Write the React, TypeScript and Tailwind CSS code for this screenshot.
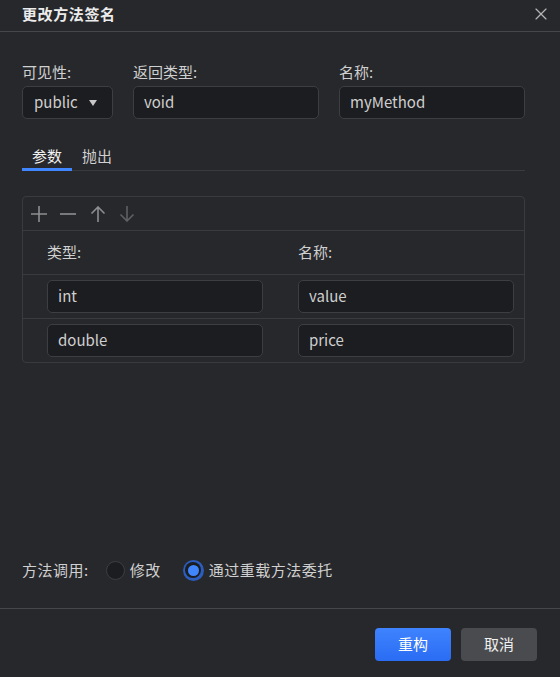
import { X } from "lucide-react";

const font = { fontFamily: '"Noto Sans CJK SC", "Noto Sans", sans-serif' };

function TextBox({ value, className = "" }: { value: string; className?: string }) {
  return (
    <div
      className={`h-[33px] rounded-[5px] border border-[#3d3e42] bg-[#1c1d20] px-[10px] flex items-center text-[15px] text-[#cfcfcf] ${className}`}
    >
      {value}
    </div>
  );
}

function Radio({ checked, label }: { checked?: boolean; label: string }) {
  return (
    <label className="flex items-center gap-[5px]">
      {checked ? (
        <span className="w-[21px] h-[21px] rounded-full bg-[#2a5dbd] flex items-center justify-center">
          <span className="w-[16px] h-[16px] rounded-full bg-[#1c1d20] flex items-center justify-center">
            <span className="w-[11px] h-[11px] rounded-full bg-[#3f86ff]" />
          </span>
        </span>
      ) : (
        <span className="w-[19px] h-[19px] rounded-full border border-[#3d3e42] bg-[#1c1d20]" />
      )}
      <span>{label}</span>
    </label>
  );
}

// toolbar glyphs, 16px box, thin strokes
function ToolIcon({ kind, color }: { kind: "plus" | "minus" | "up" | "down"; color: string }) {
  return (
    <svg width="16" height="16" viewBox="0 0 16 16" fill="none" stroke={color} strokeWidth="1.6">
      {kind === "plus" && <path d="M0 8h16M8 0v16" />}
      {kind === "minus" && <path d="M0 8h16" />}
      {kind === "up" && <path d="M8 1v15M1.5 7.5L8 1l6.5 6.5" />}
      {kind === "down" && <path d="M8 0v15M1.5 8.5L8 15l6.5-6.5" />}
    </svg>
  );
}

export default function App() {
  const params = [
    { type: "int", name: "value" },
    { type: "double", name: "price" },
  ];

  return (
    <div
      className="h-[677px] w-[560px] flex flex-col bg-[#27282b] text-[15px] text-[#d0d0d0]"
      style={font}
    >
      {/* Header */}
      <div className="h-[32px] shrink-0 border-b border-[#46474b] pl-[22px] pr-[9px] flex items-center justify-between">
        <span className="text-[15px] font-bold tracking-[0.6px] text-[#ececec] -mt-[2px]">更改方法签名</span>
        <X className="w-[20px] h-[20px] text-[#b4b4b4] -mt-[3px]" strokeWidth={1.4} />
      </div>

      {/* Body */}
      <div className="flex-1 px-[22px] pt-[30px]">
        <div className="flex gap-[20px] pr-[12px]">
          <div className="w-[91px]">
            <div className="leading-[20px] mb-[4px]">可见性:</div>
            <div className="h-[33px] rounded-[5px] border border-[#3d3e42] bg-[#1c1d20] pl-[11px] pr-[15px] flex items-center justify-between text-[#cfcfcf]">
              <span>public</span>
              <span className="w-0 h-0 border-l-[4px] border-r-[4px] border-t-[6px] border-l-transparent border-r-transparent border-t-[#c8c8c8]" />
            </div>
          </div>
          <div className="w-[186px]">
            <div className="leading-[20px] mb-[4px]">返回类型:</div>
            <TextBox value="void" />
          </div>
          <div className="w-[186px]">
            <div className="leading-[20px] mb-[4px]">名称:</div>
            <TextBox value="myMethod" />
          </div>
        </div>

        {/* Tabs */}
        <div className="mt-[27px] mr-[13px] flex border-b border-[#3a3b3f]">
          <div className="px-[10px] pb-[2px] leading-[20px] text-[#f0f0f0] border-b-[3px] border-[#3f86ff] -mb-px">
            参数
          </div>
          <div className="px-[10px] leading-[20px] text-[#d0d0d0]">抛出</div>
        </div>

        {/* Parameter table */}
        <div className="mt-[25px] mr-[13px] rounded-[4px] border border-[#3a3b3f]">
          <div className="h-[34px] flex items-center pl-[8px] border-b border-[#3a3b3f]">
            <ToolIcon kind="plus" color="#8d8e91" />
            <span className="ml-[13px]"><ToolIcon kind="minus" color="#8d8e91" /></span>
            <span className="ml-[14px]"><ToolIcon kind="up" color="#8d8e91" /></span>
            <span className="ml-[13px]"><ToolIcon kind="down" color="#5f6064" /></span>
          </div>
          <div className="h-[43px] grid grid-cols-2 gap-[35px] pl-[24px] pr-[10px] items-center">
            <span>类型:</span>
            <span>名称:</span>
          </div>
          {params.map((p) => (
            <div
              key={p.name}
              className="h-[44px] grid grid-cols-2 gap-[35px] pl-[24px] pr-[10px] items-center border-t border-[#3a3b3f]"
            >
              <TextBox value={p.type} />
              <TextBox value={p.name} />
            </div>
          ))}
        </div>
      </div>

      {/* Method call option */}
      <div className="h-[38px] shrink-0 px-[22px] mb-[19px] flex items-center tracking-[0.5px]">
        <span>方法调用:</span>
        <span className="ml-[17px]"><Radio label="修改" /></span>
        <span className="ml-[22px]"><Radio checked label="通过重载方法委托" /></span>
      </div>

      {/* Footer */}
      <div className="h-[69px] shrink-0 border-t border-[#46474b] pt-[19px] pr-[23px] flex justify-end gap-[10px]">
        <button className="w-[76px] h-[33px] rounded-[4px] bg-gradient-to-b from-[#3f83ff] to-[#2a6cf3] text-white text-[15px]">
          重构
        </button>
        <button className="w-[76px] h-[33px] rounded-[4px] bg-[#4a4b4f] text-[#f0f0f0] text-[15px]">
          取消
        </button>
      </div>
    </div>
  );
}
